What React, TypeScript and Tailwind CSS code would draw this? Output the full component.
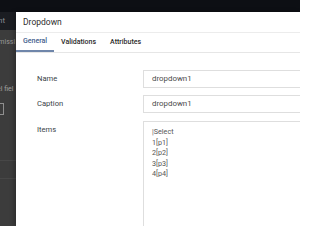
import React from 'react';

const font = { fontFamily: 'Roboto, "Liberation Sans", sans-serif' };

/** 배경 페이지 — 모달 뒤로 살짝 보이는 왼쪽 조각 */
function BackdropPage() {
  return (
    <div className="flex h-full w-full flex-col bg-[#3c3c3c]">
      <div className="h-[12px] w-full bg-[#0d0f14]" />
      <div className="flex h-[18px] w-full items-center bg-[#1b1d22]">
        <span className="-ml-[2px] text-[8px] leading-none text-[#8a8c92]">nt</span>
      </div>
      <div className="flex w-[16px] flex-col overflow-hidden">
        <span className="mt-[9px] -ml-[4px] whitespace-nowrap text-[7px] leading-none text-[#9a9a9a]">
          rmissi
        </span>
        <span className="mt-[40px] -ml-[3px] whitespace-nowrap text-[7px] leading-none text-[#a0a0a0]">
          el fiel
        </span>
        <div className="mt-[10px] h-[12px] w-[4px] border border-l-0 border-[#8f8f8f]" />
        <div className="mt-[45px] h-px w-full bg-[#474747]" />
        <div className="mt-[17px] h-px w-full bg-[#474747]" />
      </div>
    </div>
  );
}

export default function App() {
  const items = ['|Select', '1[p1]', '2[p2]', '3[p3]', '4[p4]'];
  return (
    <div className="relative h-[226px] w-[300px] overflow-hidden" style={font}>
      <BackdropPage />

      {/* 모달 다이얼로그 */}
      <div className="absolute bottom-0 left-[16px] right-0 top-[12px] flex flex-col bg-white shadow-[-2px_0_4px_rgba(0,0,0,0.25)]">
        <header className="flex h-[21px] shrink-0 items-center border-b border-[#ececec] pl-[7px]">
          <h1 className="text-[8.5px] leading-none text-[#2e2e2e]">Dropdown</h1>
        </header>

        <nav className="flex h-[20px] shrink-0 items-stretch border-b border-[#e6e6e6]">
          <span className="flex items-center border-b-2 border-[#6f86aa] px-[7px] text-[7px] font-medium leading-none text-[#3f5d8c]">
            General
          </span>
          <span className="flex items-center px-[7px] text-[7px] font-medium leading-none text-[#2a2a2a]">
            Validations
          </span>
          <span className="flex items-center px-[7px] text-[7px] font-medium leading-none text-[#2a2a2a]">
            Attributes
          </span>
        </nav>

        <main className="flex flex-1 flex-col gap-[7px] pt-[17px]">
          <div className="flex items-center">
            <label className="w-[127px] pl-[21px] text-[7.6px] leading-none text-[#3a3f48]">Name</label>
            <div className="flex h-[18px] flex-1 items-center border border-r-0 border-[#dedede] pl-[8px] text-[7.9px] text-[#4a4a4a]">
              dropdown1
            </div>
          </div>
          <div className="flex items-center">
            <label className="w-[127px] pl-[21px] text-[7.6px] leading-none text-[#3a3f48]">Caption</label>
            <div className="flex h-[18px] flex-1 items-center border border-r-0 border-[#dedede] pl-[8px] text-[7.9px] text-[#4a4a4a]">
              dropdown1
            </div>
          </div>
          <div className="flex flex-1 items-start pt-px">
            <label className="w-[127px] pl-[21px] pt-[5px] text-[7.6px] leading-none text-[#3a3f48]">Items</label>
            <div className="flex h-full flex-1 flex-col border border-b-0 border-r-0 border-[#dedede] pl-[8px] pt-[5px]">
              {items.map((item) => (
                <span key={item} className="h-[10.5px] text-[7.2px] leading-[10.5px] text-[#555]">
                  {item}
                </span>
              ))}
            </div>
          </div>
        </main>
      </div>
    </div>
  );
}
